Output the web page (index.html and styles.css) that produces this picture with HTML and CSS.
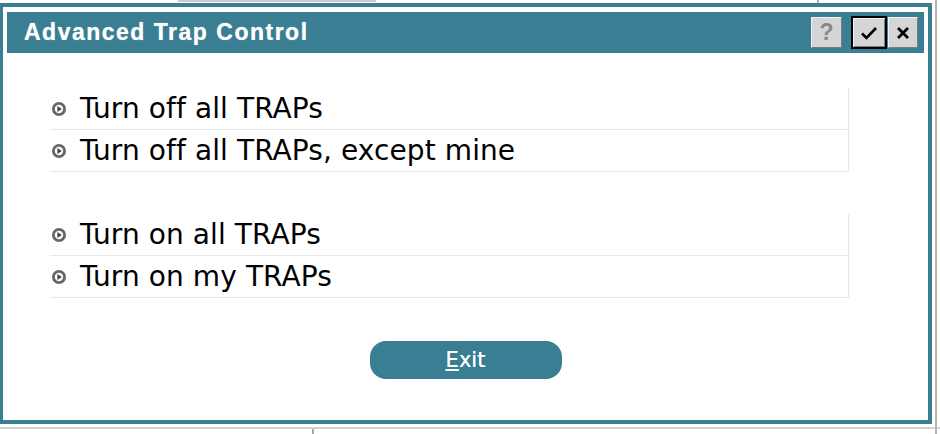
FILE: index.html
```html
<!DOCTYPE html>
<html>
<head>
    <title>Advanced Trap Control</title>
    <link rel="stylesheet" href="styles.css">
</head>
<body>
    <div class="dialog">
        <div class="titlebar">
            <h1 class="title">Advanced Trap Control</h1>
            <div class="tools">
                <button class="tool help">?</button>
                <button class="tool ok">
                    <svg width="18" height="16" viewBox="0 0 18 16"><path d="M2 8.5 L6.5 13 L16 3" fill="none" stroke="#000" stroke-width="2.6"/></svg>
                </button>
                <button class="tool close">
                    <svg width="14" height="14" viewBox="0 0 14 14"><path d="M2 2 L12 12 M12 2 L2 12" stroke="#000" stroke-width="2.8"/></svg>
                </button>
            </div>
        </div>

        <div class="content">
            <div class="group">
                <div class="row"><svg class="bullet" width="14" height="14" viewBox="0 0 14 14"><circle cx="7" cy="7" r="5.6" fill="#fff" stroke="#666" stroke-width="2.8"/><path d="M5.4 3.9 L9.9 7 L5.4 10.1 Z" fill="#444"/></svg>Turn off all TRAPs</div>
                <div class="row"><svg class="bullet" width="14" height="14" viewBox="0 0 14 14"><circle cx="7" cy="7" r="5.6" fill="#fff" stroke="#666" stroke-width="2.8"/><path d="M5.4 3.9 L9.9 7 L5.4 10.1 Z" fill="#444"/></svg>Turn off all TRAPs, except mine</div>
            </div>
            <div class="group">
                <div class="row"><svg class="bullet" width="14" height="14" viewBox="0 0 14 14"><circle cx="7" cy="7" r="5.6" fill="#fff" stroke="#666" stroke-width="2.8"/><path d="M5.4 3.9 L9.9 7 L5.4 10.1 Z" fill="#444"/></svg>Turn on all TRAPs</div>
                <div class="row"><svg class="bullet" width="14" height="14" viewBox="0 0 14 14"><circle cx="7" cy="7" r="5.6" fill="#fff" stroke="#666" stroke-width="2.8"/><path d="M5.4 3.9 L9.9 7 L5.4 10.1 Z" fill="#444"/></svg>Turn on my TRAPs</div>
            </div>
            <div class="actions">
                <button class="exit"><u>E</u>xit</button>
            </div>
        </div>
    </div>
</body>
</html>
```

FILE: styles.css
```css
html, body {
    margin: 0;
    padding: 0;
}

body {
    width: 940px;
    height: 434px;
    overflow: hidden;
    background-color: #fff;
    background-image:
        linear-gradient(#b4b4b4, #b4b4b4),
        linear-gradient(#d0d0d0, #d0d0d0),
        linear-gradient(#a8a8a8, #a8a8a8),
        linear-gradient(#cacaca, #cacaca),
        linear-gradient(#b0b0b0, #b0b0b0);
    background-repeat: no-repeat;
    background-size: 2px 434px, 940px 2px, 2px 6px, 198px 2px, 2px 4px;
    background-position: 935px 0, 0 427px, 312px 429px, 178px 0, 817px 0;
    font-family: "DejaVu Sans", "Noto Sans", sans-serif;
}

.dialog {
    box-sizing: border-box;
    width: 932px;
    height: 421px;
    margin-top: 3px;
    border: 4px solid #3a7e93;
    border-left-width: 3px;
    padding: 5px 4px 0 4px;
    background: #fff;
    display: flex;
    flex-direction: column;
}

.titlebar {
    height: 41px;
    background: #3a7e93;
    display: flex;
    align-items: center;
    justify-content: space-between;
    padding: 0 6px 0 17px;
}

h1.title {
    margin: 0;
    font-family: "Liberation Sans", Arial, sans-serif;
    font-weight: bold;
    font-size: 23px;
    letter-spacing: 1.5px;
    color: #fff;
    text-shadow: 0 0 1px rgba(255, 255, 255, 0.7);
}

.tools {
    display: flex;
    align-items: center;
}

.tool {
    box-sizing: border-box;
    height: 31px;
    width: 31px;
    padding: 0;
    margin: 0;
    display: flex;
    align-items: center;
    justify-content: center;
    background: #d5d5d5;
    border: 1px solid;
    border-color: #f2f2f2 #7c7c7c #7c7c7c #f2f2f2;
    font-family: "Liberation Sans", Arial, sans-serif;
    font-weight: bold;
    font-size: 23px;
    color: #888;
}

.help {
    margin-right: 9px;
}

.ok {
    width: 36px;
    height: 33px;
    border: 2px solid #000;
    box-shadow: inset 1px 1px 0 #f2f2f2, inset -1px -1px 0 #7c7c7c;
}

.close {
    width: 30px;
    margin-left: 1px;
}

.content {
    flex: 1;
    display: flex;
    flex-direction: column;
    padding: 35px 0 0 43px;
}

.group {
    width: 799px;
    margin-bottom: 42px;
}

.row {
    height: 41px;
    display: flex;
    align-items: center;
    border-bottom: 1px solid #e6e9ec;
    border-right: 1px solid #e6e9ec;
    font-size: 28px;
    letter-spacing: 0.1px;
    color: #000;
}

.bullet {
    margin: 0 14px 0 2px;
    flex: none;
}

.actions {
    display: flex;
    width: 799px;
    justify-content: center;
    margin-top: 1px;
}

.exit {
    width: 192px;
    height: 38px;
    margin-left: 32px;
    border: none;
    border-radius: 16px;
    background: #3a7e93;
    color: #fff;
    font-family: "DejaVu Sans", sans-serif;
    font-size: 21px;
    padding: 0;
    text-shadow: 0 0 0.6px #fff;
}
```
